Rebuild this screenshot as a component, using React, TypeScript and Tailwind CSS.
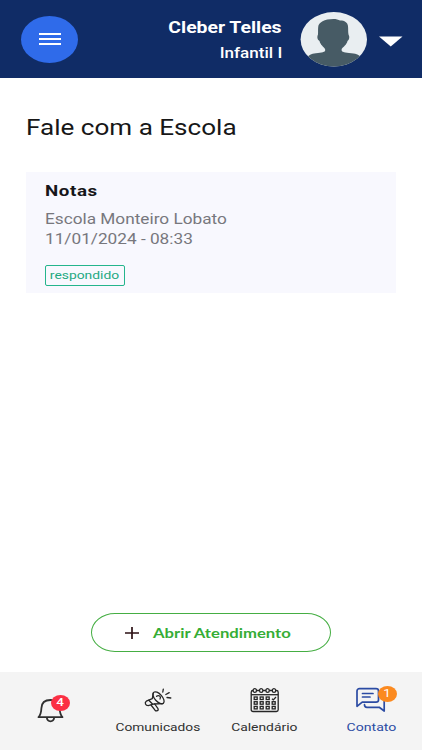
import type React from "react";
import clsx from "clsx";

interface WideProps {
	className?: string;
	children: React.ReactNode;
}

// Extended-width lettering used across the app
const Wide: React.FC<WideProps> = ({ className, children }) => (
	<span className={clsx("block w-fit whitespace-nowrap", className)}>
		{children}
	</span>
);

const Avatar = () => (
	<svg viewBox="0 0 67 55" className="h-[55px] w-[67px]">
		<defs>
			<clipPath id="avatar">
				<ellipse cx="33.8" cy="27.3" rx="33.2" ry="27.2" />
			</clipPath>
		</defs>
		<g clipPath="url(#avatar)">
			<rect width="67" height="55" fill="#e9eef1" />
			<path
				d="M18.2 15C18.5 10.500 24.500 7 33.500 7C36 7 38.500 7.500 40 8.600C44.500 8.500 47.500 10.500 48 14C48.300 17 48 20 48.500 22.500C49.800 24.500 49.500 27.500 47.500 29C46.500 33 43.500 34.500 41.700 37C41 40 43.500 40.300 49 41C56 41.500 58.500 42.500 61 45V55H7V45C10 42.500 12 41.500 18 41C23.500 40.300 26 40 25 37C23.500 34.500 20.500 33 19.500 29C17 27.500 17 24.500 18 22.500C18.200 20 17.900 18 18.200 15Z"
				fill="#475b65"
			/>
		</g>
	</svg>
);

const Bell = () => (
	<svg viewBox="0 0 28 26" className="h-[26px] w-7" fill="none" stroke="#303030" strokeWidth="1.800" strokeLinejoin="round">
		<path d="M1.500 19.200C4 16.700 4.200 14.200 4.400 10.200C4.600 4.900 8 2 13.500 2S22.400 4.900 22.600 10.200C22.800 14.200 23 16.700 25.500 19.200Z" />
		<path d="M9.800 19.700C10.200 22.200 11.500 23.300 13.500 23.300S16.800 22.200 17.200 19.700" />
	</svg>
);

const Megaphone = () => (
	<svg viewBox="0 0 28 24" className="h-6 w-7" fill="none" stroke="#252525" strokeWidth="1.300" strokeLinecap="round" strokeLinejoin="round">
		<ellipse cx="14.500" cy="9.800" rx="3.700" ry="7.300" transform="rotate(-42 14.500 9.800)" />
		<path d="M9.300 4.800L8.300 10.700L2.300 13.200C.3 14.700 1.500 17.500 4.200 17.700L9.700 16L18.800 15.600" />
		<path d="M4.800 12.200L8.700 16.300M7 17L11 22.200C12.200 23.500 15 22.500 14 20.700L10.700 16" />
		<path d="M12.600 8.300C14.800 6.500 17.500 8.700 16 11" />
		<path d="M18.800 4L19.300 1.200M21.800 6.500L25.200 4.600M23 9.500L26.800 10" />
	</svg>
);

const CHECK_DAY = 3;

const Calendar = () => (
	<svg viewBox="0 0 30 26" className="h-[26px] w-[30px]" fill="none" stroke="#252525" strokeWidth="1.300">
		<rect x="1.200" y="3.500" width="27" height="21" rx="1.800" />
		<path d="M1.200 7.700H28.200" />
		{[4.8, 11.2, 17.6, 24].map((x) => (
			<ellipse key={x} cx={x} cy="3.5" rx="1.700" ry="1.900" fill="#f4f4f4" />
		))}
		{Array.from({ length: 12 }, (_, day) => {
			const x = 4.2 + (day % 4) * 6;
			const y = 10 + Math.floor(day / 4) * 4.7;
			return day === CHECK_DAY ? (
				<path key={day} d="M22 11.700L23.300 12.900L26 10" />
			) : (
				<rect key={day} x={x} y={y} width="3" height="2.500" />
			);
		})}
	</svg>
);

const Chat = () => (
	<svg viewBox="0 0 30 26" className="h-[26px] w-[30px]" fill="none" stroke="#2b4ba3" strokeWidth="1.700" strokeLinecap="round" strokeLinejoin="round">
		<path d="M1 19.300V4C1 2.500 2 1.700 3.500 1.700H20C21.500 1.700 22.500 2.500 22.500 4V13C22.500 14.500 21.500 15.200 20 15.200H6.200Z" />
		<path d="M6.500 6.500H17M6.500 10H14" />
		<path d="M8.500 17.700C8.500 19.200 9.500 20.300 11 20.300H23.200L28.200 24V9.500C28.200 8 27.500 7.200 26 7.200" />
	</svg>
);

export default function App() {
	return (
		<div className="flex h-[750px] w-[422px] flex-col overflow-hidden bg-white font-['Roboto',sans-serif]">
			<header className="flex h-[78px] shrink-0 items-center bg-[#102c66] pr-[19px] pl-[21px]">
				<button
					type="button"
					aria-label="Menu"
					className="flex h-[47px] w-[57px] flex-col items-center justify-center gap-[3px] rounded-[50%] bg-[#2f6bea]"
				>
					<span className="h-0.5 w-[22px] bg-white" />
					<span className="h-0.5 w-[22px] bg-white" />
					<span className="h-0.5 w-[22px] bg-white" />
				</button>
				<div className="flex flex-1 flex-col items-end gap-px pt-[3px] pr-[18px] text-white">
					<Wide className="origin-right scale-x-[1.21] text-[16px] leading-6 font-bold">Cleber Telles</Wide>
					<Wide className="origin-right scale-x-[1.22] text-[14px] leading-6 font-medium">Infantil I</Wide>
				</div>
				<Avatar />
				<svg viewBox="0 0 24 11" className="mt-1 ml-3 h-[11px] w-6" fill="#fff">
					<path d="M0 .5H23.500L11.750 10.500Z" />
				</svg>
			</header>

			<main className="flex flex-1 flex-col px-[26px]">
				<h1 className="pt-[34px] text-[#171717]">
					<Wide className="origin-left scale-x-[1.185] text-[22px] leading-8">Fale com a Escola</Wide>
				</h1>

				<section className="mt-7 h-[121px] bg-[#f8f8fe] px-[19px] pt-[9px]">
					<Wide className="origin-left scale-x-[1.21] text-[15.500px] leading-5 font-bold tracking-[0.5px] text-[#16161a]">Notas</Wide>
					<Wide className="mt-2 origin-left scale-x-[1.23] text-[14px] leading-5 text-[#77777d]">Escola Monteiro Lobato</Wide>
					<Wide className="origin-left scale-x-[1.23] text-[14px] leading-5 text-[#77777d]">11/01/2024 - 08:33</Wide>
					<div className="mt-4 flex h-[21px] w-20 items-center justify-center rounded-[2px] border-[1.500px] border-[#24b58c] text-[#24a982]">
						<Wide className="scale-x-[1.26] text-[11px] leading-4">respondido</Wide>
					</div>
				</section>

				<button
					type="button"
					className="mt-auto mb-5 flex h-[39px] w-60 items-center self-center rounded-[24px/19.5px] border border-[#45ae43] pl-8 text-[#35ad35]"
				>
					<svg viewBox="0 0 16 14" className="h-3.5 w-4" stroke="#2d1115" strokeWidth="1.700">
						<path d="M1 7H15M8 1V13" />
					</svg>
					<Wide className="ml-[13px] origin-left scale-x-[1.19] font-['Lato',sans-serif] text-[14px] leading-5 font-bold">Abrir Atendimento</Wide>
				</button>
			</main>

			<nav className="grid h-[78px] shrink-0 grid-cols-[102px_111px_103px_106px] bg-[#f4f4f4] text-[11px] text-[#303030]">
				<div className="flex justify-center pt-[26px]">
					<div className="relative h-fit">
						<Bell />
						<span className="absolute -top-[3px] left-[13.500px] flex h-4 w-[19px] items-center justify-center rounded-[50%] bg-[#fb3044] text-white">
							<Wide className="scale-x-[1.22] text-[11px] leading-4 font-medium">4</Wide>
						</span>
					</div>
				</div>
				<div className="flex flex-col items-center pt-4">
					<Megaphone />
					<Wide className="mt-2 scale-x-[1.25] leading-4">Comunicados</Wide>
				</div>
				<div className="flex flex-col items-center pt-[15px]">
					<Calendar />
					<Wide className="mt-[7px] scale-x-[1.26] leading-4">Calendário</Wide>
				</div>
				<div className="flex flex-col items-center pt-[15px] pl-1 text-[#2b4ba3]">
					<div className="relative">
						<Chat />
						<span className="absolute -top-px left-[22px] flex h-4 w-[19px] items-center justify-center rounded-[50%] bg-[#fb8a20] text-white">
							<Wide className="scale-x-[1.22] text-[11px] leading-4">1</Wide>
						</span>
					</div>
					<Wide className="mt-[7px] scale-x-[1.28] leading-4">Contato</Wide>
				</div>
			</nav>
		</div>
	);
}
